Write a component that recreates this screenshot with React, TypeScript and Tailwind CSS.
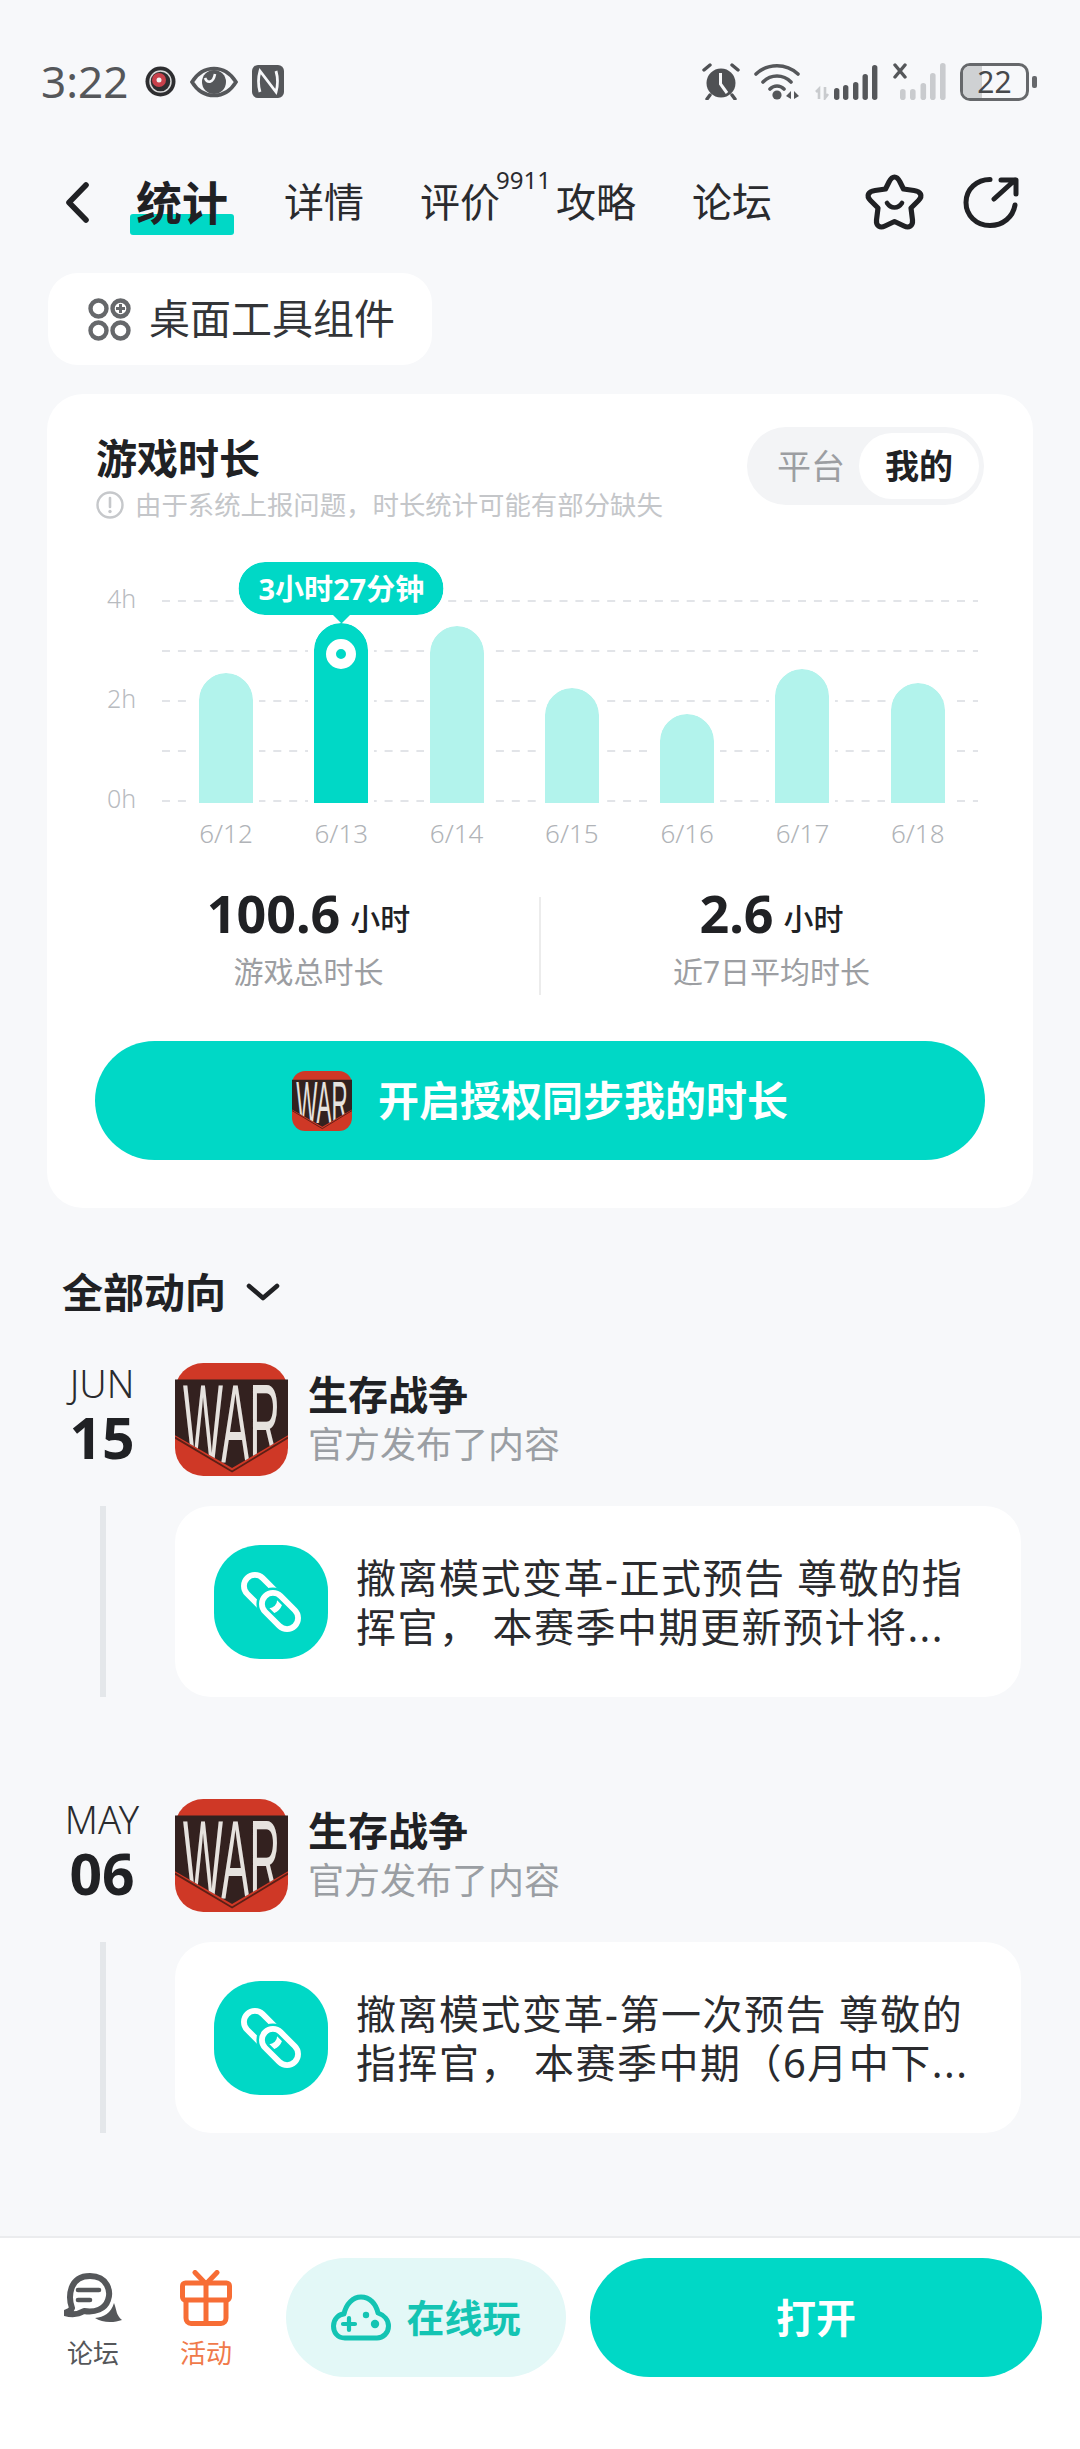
import React from "react";

function RecordIcon() {
  return (
    <svg width="31" height="31" viewBox="0 0 31 31">
      <circle cx="15.5" cy="15.5" r="15" fill="#2e2e30" />
      <circle cx="15.5" cy="15.5" r="10.5" fill="none" stroke="#d9d9d9" strokeWidth="1.5" />
      <circle cx="14" cy="14" r="7" fill="#c9414b" />
      <circle cx="14" cy="14" r="2.5" fill="#f2f2f2" />
    </svg>
  );
}
function EyeIcon() {
  return (
    <svg width="48" height="34" viewBox="0 0 48 34">
      <path d="M2 17C13 -1 35 -1 46 17C35 35 13 35 2 17Z" fill="none" stroke="#55575a" strokeWidth="3.6" />
      <circle cx="24" cy="17" r="12" fill="#55575a" />
      <path d="M15 13C17 18 23 19 25 9" fill="none" stroke="#f7f8fa" strokeWidth="2.6" />
    </svg>
  );
}
function NfcIcon() {
  return (
    <svg width="32" height="33" viewBox="0 0 32 33">
      <rect width="32" height="33" rx="6" fill="#55575a" />
      <path d="M8 27C6 20 6 13 8 6L24 27C26 20 26 13 24 6" fill="none" stroke="#f7f8fa" strokeWidth="2.8" />
    </svg>
  );
}
function AlarmIcon() {
  return (
    <svg width="38" height="37" viewBox="0 0 38 37">
      <circle cx="19" cy="20" r="14.5" fill="#4f5154" />
      <path d="M18.5 10V21L25 30" fill="none" stroke="#f7f8fa" strokeWidth="3" />
      <path d="M2 7L8 2M30 2L36 7M8 32L5 36M30 32L33 36" stroke="#4f5154" strokeWidth="3.4" strokeLinecap="round" />
    </svg>
  );
}
function WifiIcon() {
  return (
    <svg width="47" height="37" viewBox="0 0 47 37">
      <path d="M2 11C14 0 32 0 44 11M9 19C17 11 29 11 37 19M16 26C20 22 26 22 30 26" fill="none" stroke="#55575a" strokeWidth="3.6" strokeLinecap="round" />
      <circle cx="23" cy="32" r="4.6" fill="#55575a" />
      <path d="M32 33L37 28V36ZM40 28L45 33L40 36Z" fill="#55575a" />
    </svg>
  );
}
function SignalOne() {
  const bars = [
    [19, 12],
    [28, 15],
    [38, 18],
    [47.5, 26],
    [57, 35],
  ];
  return (
    <svg width="64" height="37" viewBox="0 0 64 37">
      <path d="M4 36V26L1 29M10 24V35L13 31" fill="none" stroke="#c9cbce" strokeWidth="2.6" />
      {bars.map(([x, h]) => (
        <rect key={x} x={x} y={37 - h} width="5.4" height={h} rx="2.7" fill="#55575a" />
      ))}
    </svg>
  );
}
function SignalTwo() {
  const bars = [
    [7, 11],
    [17, 11],
    [27.5, 17],
    [37, 27],
    [47, 37],
  ];
  return (
    <svg width="53" height="37" viewBox="0 0 53 37">
      <path d="M2 2L12 14M12 2L2 14" stroke="#55575a" strokeWidth="3.4" strokeLinecap="round" />
      {bars.map(([x, h]) => (
        <rect key={x} x={x} y={37 - h} width="5.6" height={h} rx="2.8" fill="#c9cbce" />
      ))}
    </svg>
  );
}
function Battery() {
  return (
    <div className="flex items-center">
      <div className="relative flex h-[38px] w-[69px] items-center justify-center rounded-[10px] border-[3px] border-[#66686b]">
        <div className="absolute bottom-0 left-0 top-0 w-[19px] rounded-l-[7px] bg-[#cfd1d3]" />
        <span className="relative text-[30px] leading-[32px] text-[#47494c]">22</span>
      </div>
      <div className="ml-[3px] h-[12px] w-[5px] rounded-[2px] bg-[#66686b]" />
    </div>
  );
}
function BackIcon() {
  return (
    <svg width="25" height="43" viewBox="0 0 25 43">
      <path d="M21 4L4 21.5L21 39" fill="none" stroke="#202124" strokeWidth="5.6" strokeLinecap="round" strokeLinejoin="round" />
    </svg>
  );
}
function StarIcon() {
  return (
    <svg width="61" height="58" viewBox="0 0 61 58">
      <path d="M30.5 4C33 4 34.5 6 36 9L39.5 16L50 17.5C57 18.5 59 23 54.5 27.5L47 35L48.5 47C49 53 45 55.5 40 53L30.5 48.5L21 53C16 55.5 12 53 12.5 47L14 35L6.5 27.5C2 23 4 18.5 11 17.5L21.5 16L25 9C26.5 6 28 4 30.5 4Z" fill="none" stroke="#202124" strokeWidth="5.2" strokeLinejoin="round" />
      <path d="M23 30C27 36 34 36 38 30" fill="none" stroke="#202124" strokeWidth="4.6" strokeLinecap="round" />
    </svg>
  );
}
function ShareIcon() {
  return (
    <svg width="57" height="52" viewBox="0 0 57 52">
      <path d="M27 3.5C14 3.5 3 13 3 26.5C3 39 13 49.5 27 49.5C40 49.5 50 41 52 29" fill="none" stroke="#202124" strokeWidth="5" strokeLinecap="round" />
      <path d="M31 23L52 4M38 4H53V18" fill="none" stroke="#202124" strokeWidth="5" strokeLinecap="round" strokeLinejoin="round" />
    </svg>
  );
}
function WidgetIcon() {
  return (
    <svg width="43" height="43" viewBox="0 0 43 43">
      <g fill="none" stroke="#66686b" strokeWidth="4.4">
        <circle cx="10.5" cy="10.5" r="8" />
        <circle cx="32.5" cy="10.5" r="8" />
        <circle cx="10.5" cy="32.5" r="8" />
        <circle cx="32.5" cy="32.5" r="8" />
      </g>
      <path d="M32.5 6V15M28 10.5H37" stroke="#66686b" strokeWidth="3" />
    </svg>
  );
}
function InfoIcon() {
  return (
    <svg width="28" height="28" viewBox="0 0 28 28">
      <circle cx="14" cy="14" r="12.5" fill="none" stroke="#c6c8cb" strokeWidth="2.4" />
      <path d="M14 7V16" stroke="#c6c8cb" strokeWidth="2.6" strokeLinecap="round" />
      <circle cx="14" cy="20.5" r="1.7" fill="#c6c8cb" />
    </svg>
  );
}
function WarLogo({ size, radius }: { size: number; radius: number }) {
  const id = `war-shield-${size}`;
  return (
    <svg width={size} height={size} viewBox="0 0 100 100" className="shrink-0">
      <defs>
        <clipPath id={id}>
          <path d="M0 14.5H100V64L50.5 93L0 64Z" />
        </clipPath>
      </defs>
      <rect width="100" height="100" rx={radius} fill="#cf3826" />
      <path d="M0 14.5H100V64L50.5 93L0 64Z" fill="#33211f" />
      <path d="M0 66L50.5 96L100 66" fill="none" stroke="#5c1f16" strokeWidth="1.6" />
      <g clipPath={`url(#${id})`}>
        <text
          x="7"
          y="37"
          fontSize="42"
          textLength="86"
          lengthAdjust="spacingAndGlyphs"
          transform="scale(1 2.36)"
          fill="#e6e2de"
          style={{ fontFamily: "'Liberation Sans', sans-serif" }}
        >
          WAR
        </text>
      </g>
    </svg>
  );
}
function LinkIcon() {
  return (
    <svg width="62" height="62" viewBox="0 0 62 62">
      <g fill="none">
        <rect x="1" y="11" width="42" height="22" rx="11" transform="rotate(45 22 22)" stroke="#fff" strokeWidth="5.8" />
        <rect x="19" y="29" width="42" height="22" rx="11" transform="rotate(45 40 40)" stroke="#00d8c6" strokeWidth="11" />
        <rect x="19" y="29" width="42" height="22" rx="11" transform="rotate(45 40 40)" stroke="#fff" strokeWidth="5.8" />
      </g>
    </svg>
  );
}
function ForumIcon() {
  return (
    <svg width="58" height="50" viewBox="0 0 58 50">
      <path d="M8 35C4 24 5 3 26 3C44 3 47 19 44 27C41 36 31 40 20 38C15 41 8 42 1 40C3 39 7 38 8 35Z" fill="none" stroke="#55575a" strokeWidth="6" strokeLinejoin="round" />
      <path d="M14 17H35M14 27H26" stroke="#55575a" strokeWidth="4.6" strokeLinecap="round" />
      <path d="M50 30C53 38 52 42 58 47C50 50 38 50 31 45C40 44 47 40 50 30Z" fill="#55575a" />
    </svg>
  );
}
function GiftIcon() {
  return (
    <svg width="52" height="56" viewBox="0 0 52 56">
      <g fill="none" stroke="#f76d35" strokeWidth="5" strokeLinejoin="round">
        <path d="M15 2.5L26 14L37 2.5" strokeLinecap="round" />
        <rect x="2.5" y="13" width="47" height="17" rx="3" />
        <path d="M6 30V48C6 51 8 53.5 11 53.5H41C44 53.5 46 51 46 48V30" />
        <path d="M26 14V53" />
      </g>
    </svg>
  );
}
function CloudGameIcon() {
  return (
    <svg width="60" height="47" viewBox="0 0 60 47">
      <path d="M14 44C6 44 2.5 38 2.5 32C2.5 25 8 20 13 20C15 10 22 3 30 3C39 3 45 10 47 19C53 21 57.5 26 57.5 32C57.5 39 52 44 46 44Z" fill="none" stroke="#14c4b3" strokeWidth="5" strokeLinejoin="round" />
      <path d="M18 24V36M12 30H24" stroke="#14c4b3" strokeWidth="4.2" strokeLinecap="round" />
      <circle cx="35" cy="21" r="3.2" fill="#14c4b3" />
      <circle cx="44" cy="30" r="4.2" fill="#14c4b3" />
    </svg>
  );
}

const bars = [
  { label: "6/12", h: 130 },
  { label: "6/13", h: 180, active: true },
  { label: "6/14", h: 177 },
  { label: "6/15", h: 115 },
  { label: "6/16", h: 89 },
  { label: "6/17", h: 134 },
  { label: "6/18", h: 120 },
];

function Chart() {
  return (
    <div className="mt-[73px] flex pl-[60px]">
      <div className="-mt-[18px] flex h-[232px] w-[55px] flex-col justify-between text-[25px] font-light leading-[32px] text-[#b8bbbf]">
        <span>4h</span>
        <span>2h</span>
        <span>0h</span>
      </div>
      <div className="w-[816px]">
        <div className="relative h-[203px]">
          <svg width="816" height="203" className="absolute left-0 top-0">
            {[1, 51, 101, 151, 201].map((y) => (
              <line key={y} x1="0" x2="816" y1={y} y2={y} stroke="#e2e4e8" strokeWidth="2" strokeDasharray="8 7.9" />
            ))}
          </svg>
          <div className="relative flex h-[203px] items-end gap-[61.3px] pl-[37px]">
            {bars.map((b) => (
              <div
                key={b.label}
                className={`relative w-[54px] rounded-t-[27px] outline-[6px] outline-white ${b.active ? "bg-[#00d8c6]" : "bg-[#b2f3ec]"}`}
                style={{ height: b.h }}
              >
                {b.active && (
                  <>
                    <div className="absolute bottom-full left-1/2 mb-[8px] flex h-[53px] w-[205px] -translate-x-1/2 items-center justify-center rounded-full bg-[#00d8c6] text-[29px] font-bold text-white outline-[4px] outline-white">
                      3小时27分钟
                      <div className="absolute -bottom-[6px] left-1/2 h-[12px] w-[12px] -translate-x-1/2 rotate-45 bg-[#00d8c6]" />
                    </div>
                    <div className="absolute left-1/2 top-[16px] h-[30px] w-[30px] -translate-x-1/2 rounded-full border-[10px] border-white" />
                  </>
                )}
              </div>
            ))}
          </div>
        </div>
        <div className="mt-[14px] flex gap-[61.3px] pl-[37px]">
          {bars.map((b) => (
            <div key={b.label} className="flex w-[54px] justify-center whitespace-nowrap text-[26px] font-light leading-[32px] text-[#b0b3b7]">
              {b.label}
            </div>
          ))}
        </div>
      </div>
    </div>
  );
}

function Stat({ value, label }: { value: string; label: string }) {
  return (
    <div className="flex flex-1 flex-col items-center">
      <div className="-mt-[9px] flex h-[50px] items-baseline gap-[10px] text-[#202124]">
        <span className="text-[52px] font-bold leading-[50px]">{value}</span>
        <span className="-translate-y-[3px] text-[30px] font-medium leading-[50px]">小时</span>
      </div>
      <div className="mt-[14px] text-[30px] leading-[40px] text-[#9c9ea2]">{label}</div>
    </div>
  );
}

function FeedItem({ month, day, lines }: { month: string; day: string; lines: string[] }) {
  return (
    <div>
      <div className="flex">
        <div className="flex w-[94px] flex-col items-center">
          <div className="text-[38px] font-light leading-[40px] text-[#2a2b2e]">{month}</div>
          <div className="mt-[6px] text-[57px] font-bold leading-[56px] text-[#202124]">{day}</div>
        </div>
        <div className="ml-[26px]">
          <WarLogo size={113} radius={25} />
        </div>
        <div className="ml-[20px] pt-[7px]">
          <div className="text-[40px] font-bold leading-[50px] text-[#202124]">生存战争</div>
          <div className="text-[36px] leading-[50px] text-[#9a9ea3]">官方发布了内容</div>
        </div>
      </div>
      <div className="mt-[30px] flex">
        <div className="flex w-[94px] justify-center pl-[1px]">
          <div className="h-[191px] w-[6px] bg-[#e4e7ea]" />
        </div>
        <div className="ml-[26px] flex h-[191px] flex-1 items-center rounded-[36px] bg-white pl-[39px]">
          <div className="flex h-[114px] w-[114px] shrink-0 items-center justify-center rounded-[46px] bg-[#00d8c6]">
            <LinkIcon />
          </div>
          <div className="ml-[28px] whitespace-pre text-[40px] leading-[49px] tracking-[1.5px] text-[#2a2b2e]">
            {lines.join("\n")}
          </div>
        </div>
      </div>
    </div>
  );
}

export default function App() {
  return (
    <div className="flex h-[2449px] w-[1080px] flex-col overflow-hidden bg-[#f7f8fa] font-['Noto_Sans','Noto_Sans_CJK_SC',sans-serif]">
      <div className="flex h-[166px] items-start pl-[41px] pr-[43px] pt-[63px]">
        <div className="flex h-[37px] items-center">
          <span className="text-[44px] leading-[37px] text-[#55575a]">3:22</span>
          <span className="ml-[17px]"><RecordIcon /></span>
          <span className="ml-[14px]"><EyeIcon /></span>
          <span className="ml-[14px]"><NfcIcon /></span>
        </div>
        <div className="ml-auto flex h-[37px] items-center">
          <AlarmIcon />
          <span className="ml-[14px]"><WifiIcon /></span>
          <span className="ml-[14px]"><SignalOne /></span>
          <span className="ml-[14px]"><SignalTwo /></span>
          <span className="ml-[14px]"><Battery /></span>
        </div>
      </div>

      <div className="flex h-[72px] items-center pl-[65px] pr-[60px]">
        <BackIcon />
        <div className="relative ml-[46px] text-[46px] font-bold leading-[72px] text-[#202124]">
          <div className="absolute -left-[6px] -right-[6px] bottom-[3px] h-[21px] rounded-[3px] bg-[#00d8c6]" />
          <span className="relative">统计</span>
        </div>
        <div className="ml-[56px] flex items-center gap-[56px] text-[40px] leading-[72px] text-[#2a2b2e]">
          <span>详情</span>
          <span className="relative">
            评价
            <span className="absolute -top-[1px] left-[76px] text-[24px] leading-[30px]">9911</span>
          </span>
          <span>攻略</span>
          <span>论坛</span>
        </div>
        <div className="ml-auto flex items-center gap-[38px]">
          <StarIcon />
          <ShareIcon />
        </div>
      </div>

      <div className="ml-[48px] mt-[35px] flex h-[92px] w-[384px] items-center rounded-[30px] bg-white pl-[40px]">
        <WidgetIcon />
        <span className="ml-[18px] text-[41px] text-[#333538]">桌面工具组件</span>
      </div>

      <div className="mx-[47px] mt-[29px] h-[814px] rounded-[36px] bg-white pt-[33px]">
        <div className="flex items-start justify-between pl-[49px] pr-[49px]">
          <div className="pt-[7px]">
            <div className="text-[41px] font-bold leading-[48px] text-[#202124]">游戏时长</div>
            <div className="mt-[1px] flex h-[44px] items-center">
              <InfoIcon />
              <span className="ml-[11px] text-[26.4px] leading-[36px] text-[#c4c6c9]">由于系统上报问题，时长统计可能有部分缺失</span>
            </div>
          </div>
          <div className="flex h-[78px] w-[237px] items-center rounded-full bg-[#f3f4f6] pl-[30px]">
            <span className="text-[34px] text-[#9c9ea2]">平台</span>
            <div className="ml-[14px] flex h-[66px] w-[120px] items-center justify-center rounded-full bg-white text-[34px] font-bold text-[#202124]">
              我的
            </div>
          </div>
        </div>

        <Chart />

        <div className="ml-[31px] mt-[48px] flex h-[98px] w-[924px]">
          <Stat value="100.6" label="游戏总时长" />
          <div className="h-[98px] w-[2px] bg-[#ececec]" />
          <Stat value="2.6" label="近7日平均时长" />
        </div>

        <div className="mx-[48px] mt-[46px] flex h-[119px] items-center justify-center rounded-full bg-[#00d8c6]">
          <WarLogo size={60} radius={22} />
          <span className="ml-[26px] text-[41px] font-bold text-white">开启授权同步我的时长</span>
        </div>
      </div>

      <div className="ml-[62px] mt-[59px] flex h-[50px] items-center">
        <span className="text-[41px] font-semibold leading-[50px] text-[#202124]">全部动向</span>
        <svg width="34" height="18" viewBox="0 0 34 18" className="ml-[20px]">
          <path d="M3 3L17 15L31 3" fill="none" stroke="#202124" strokeWidth="4.6" strokeLinecap="round" strokeLinejoin="round" />
        </svg>
      </div>

      <div className="ml-[55px] mr-[59px] mt-[46px] flex flex-col gap-[102px]">
        <FeedItem month="JUN" day="15" lines={["撤离模式变革-正式预告 尊敬的指", "挥官， 本赛季中期更新预计将..."]} />
        <FeedItem month="MAY" day="06" lines={["撤离模式变革-第一次预告 尊敬的", "指挥官， 本赛季中期（6月中下..."]} />
      </div>

      <div className="mt-auto flex h-[213px] items-start border-t-2 border-[#ebecee] bg-white pl-[60px] pt-[20px]">
        <div className="mt-[10px] flex w-[66px] flex-col items-center">
          <div className="flex h-[60px] items-center"><ForumIcon /></div>
          <div className="mt-[10px] text-[26px] leading-[30px] text-[#55575a]">论坛</div>
        </div>
        <div className="ml-[47px] mt-[10px] flex w-[66px] flex-col items-center">
          <div className="flex h-[60px] items-center"><GiftIcon /></div>
          <div className="mt-[10px] text-[26px] leading-[30px] text-[#f07a4a]">活动</div>
        </div>
        <div className="ml-[47px] flex h-[119px] w-[280px] items-center justify-center rounded-full bg-[#e3f8f7]">
          <CloudGameIcon />
          <span className="ml-[15px] text-[38px] font-bold text-[#14c4b3]">在线玩</span>
        </div>
        <div className="ml-[24px] flex h-[119px] w-[452px] items-center justify-center rounded-full bg-[#00d8c6] text-[40px] font-bold text-white">
          打开
        </div>
      </div>
    </div>
  );
}
